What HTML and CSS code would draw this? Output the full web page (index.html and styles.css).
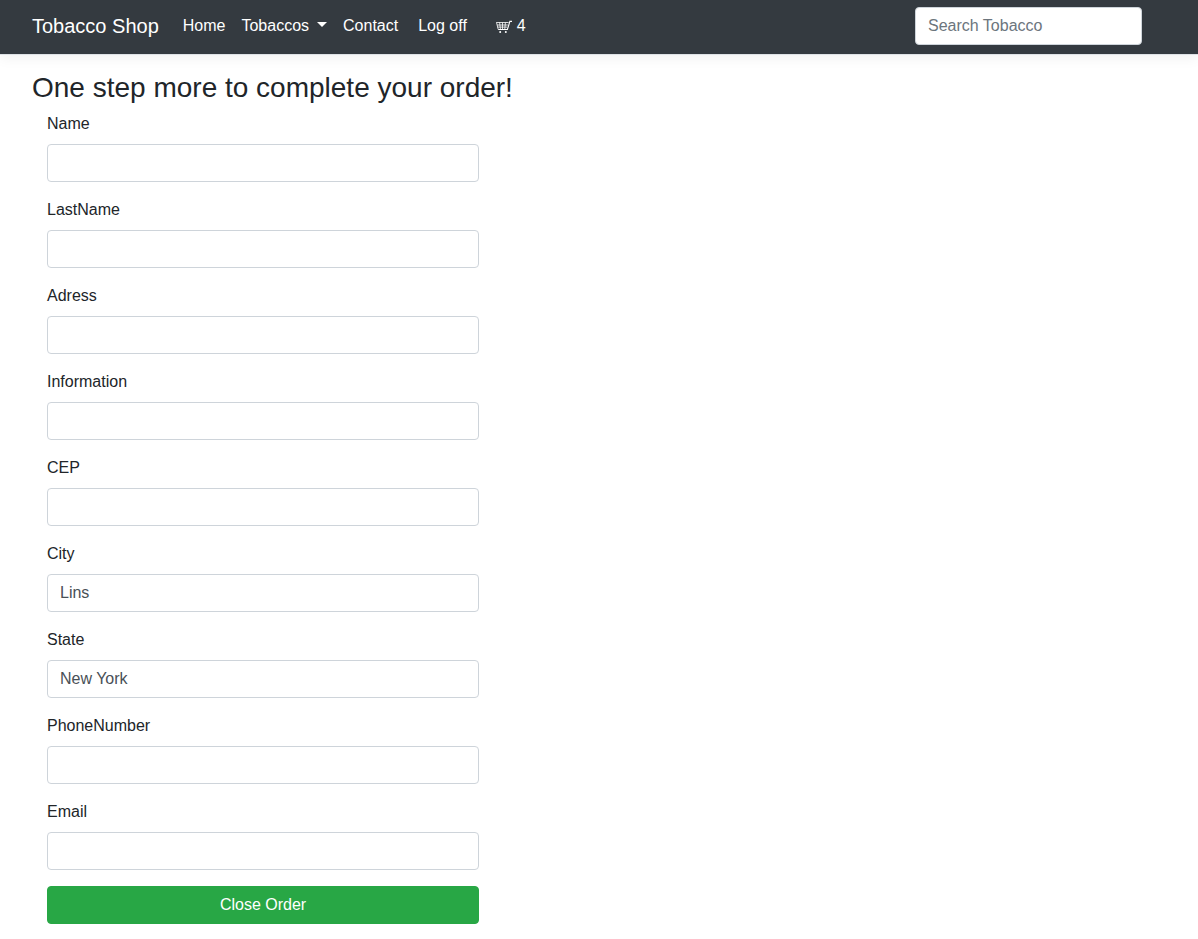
FILE: index.html
```html
<!DOCTYPE html>
<html lang="en">
<head>
  <meta charset="utf-8">
  <meta name="viewport" content="width=device-width, initial-scale=1">
  <title>Checkout - Tobacco Shop</title>
  <link rel="stylesheet" href="styles.css">
</head>
<body>
  <header class="navbar">
    <a class="brand" href="#">Tobacco Shop</a>
    <nav class="nav">
      <a class="nav-link" href="#">Home</a>
      <a class="nav-link dropdown-toggle" href="#">Tobaccos</a>
      <a class="nav-link" href="#">Contact</a>
      <a class="nav-link logoff" href="#">Log off</a>
      <a class="nav-link cart" href="#" aria-label="Shopping cart, 4 items">
        <svg class="cart-icon" viewBox="0 0 16 14" aria-hidden="true">
          <path d="M0.3 3.5H12.6M1 6H11.8M1.5 8.1H11.2M0.5 3.5L2.2 10.4M3.6 3.5L4.4 10M6.5 3.5V10M9.4 3.5L8.8 10" fill="none" stroke="currentColor" stroke-width="0.8"/>
          <path d="M16 2.4H13.9L11.4 10.5H2.2" fill="none" stroke="currentColor" stroke-width="1.1"/>
          <circle cx="4.2" cy="13" r="1" fill="currentColor"/>
          <circle cx="9.8" cy="13" r="1" fill="currentColor"/>
        </svg>
        <span>4</span>
      </a>
    </nav>
    <form class="search" role="search">
      <input class="form-control" type="search" placeholder="Search Tobacco" aria-label="Search Tobacco">
    </form>
  </header>

  <main class="content">
    <h1 class="title">One step more to complete your order!</h1>
    <form class="order-form">
      <div class="form-group">
        <label for="name">Name</label>
        <input class="form-control" id="name" type="text">
      </div>
      <div class="form-group">
        <label for="lastname">LastName</label>
        <input class="form-control" id="lastname" type="text">
      </div>
      <div class="form-group">
        <label for="adress">Adress</label>
        <input class="form-control" id="adress" type="text">
      </div>
      <div class="form-group">
        <label for="information">Information</label>
        <input class="form-control" id="information" type="text">
      </div>
      <div class="form-group">
        <label for="cep">CEP</label>
        <input class="form-control" id="cep" type="text">
      </div>
      <div class="form-group">
        <label for="city">City</label>
        <select class="form-control" id="city"><option>Lins</option></select>
      </div>
      <div class="form-group">
        <label for="state">State</label>
        <select class="form-control" id="state"><option>New York</option></select>
      </div>
      <div class="form-group">
        <label for="phone">PhoneNumber</label>
        <input class="form-control" id="phone" type="tel">
      </div>
      <div class="form-group">
        <label for="email">Email</label>
        <input class="form-control" id="email" type="email">
      </div>
      <button class="btn-submit" type="submit">Close Order</button>
    </form>
  </main>
</body>
</html>
```

FILE: styles.css
```css
*,
*::before,
*::after {
  box-sizing: border-box;
}

body {
  margin: 0;
  background: #fff;
  color: #212529;
  font-family: "Liberation Sans", Arial, sans-serif;
  font-size: 16px;
  line-height: 24px;
}

.navbar {
  display: flex;
  align-items: center;
  padding: 7px 56px 9px 32px;
  background: #343a40;
  border-bottom: 1px solid #dee2e6;
  box-shadow: 0 4px 12px rgba(0, 0, 0, 0.05);
}

.brand {
  margin-right: 16px;
  color: #fff;
  font-size: 20px;
  line-height: 30px;
  text-decoration: none;
  white-space: nowrap;
}

.nav {
  display: flex;
  align-items: center;
  flex: 1;
}

.nav-link {
  padding: 0 8px;
  color: #fff;
  text-decoration: none;
  white-space: nowrap;
}

.dropdown-toggle {
  display: flex;
  align-items: center;
  gap: 8px;
}

.dropdown-toggle::after {
  content: "";
  margin-bottom: 3px;
  border: 5px solid transparent;
  border-top-color: #fff;
  border-bottom: 0;
}

.logoff {
  margin-left: 4px;
}

.cart {
  display: flex;
  align-items: center;
  gap: 5px;
  margin-left: 13px;
}

.cart-icon {
  width: 16px;
  height: 14px;
}

.search {
  flex: 0 1 227px;
}

.content {
  padding: 16px 57px 15px 32px;
}

.title {
  margin: 0 0 7px;
  font-size: 28px;
  font-weight: 400;
  line-height: 34px;
}

.order-form {
  width: calc(100% * 5 / 12);
  min-width: 280px;
  padding: 0 15px;
}

.form-group {
  display: flex;
  flex-direction: column;
  gap: 8px;
  margin-bottom: 16px;
}

.form-control {
  display: block;
  width: 100%;
  height: 38px;
  padding: 6px 12px;
  appearance: none;
  background: #fff;
  border: 1px solid #ced4da;
  border-radius: 4px;
  color: #495057;
  font: inherit;
}

.form-control::placeholder {
  color: #6c757d;
  opacity: 1;
}

.btn-submit {
  width: 100%;
  padding: 6px 12px;
  background: #28a745;
  border: 1px solid #28a745;
  border-radius: 4px;
  color: #fff;
  font: inherit;
  cursor: pointer;
}
```
